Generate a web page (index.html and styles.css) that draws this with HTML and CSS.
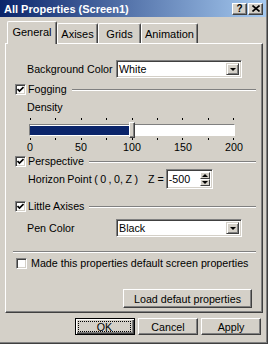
FILE: index.html
```html
<!DOCTYPE html>
<html>
<head>
<title>All Properties (Screen1)</title>
<link rel="stylesheet" href="styles.css">
</head>
<body>
<div class="dialog">
  <div class="titlebar">
    <span class="title">All Properties (Screen1)</span>
    <span class="capbtn">?</span>
    <span class="capbtn close"><svg width="8" height="7" viewBox="0 0 8 7"><path d="M0.5 0.5L7.5 6.5M7.5 0.5L0.5 6.5" stroke="#000" stroke-width="1.6"/></svg></span>
  </div>

  <div class="tabs">
    <div class="tab active w-general">General</div>
    <div class="tab w-axises">Axises</div>
    <div class="tab w-grids">Grids</div>
    <div class="tab w-anim">Animation</div>
  </div>

  <div class="panel">
    <div class="field first">
      <span class="label">Background Color</span>
      <div class="select"><span class="value">White</span><span class="dropbtn"><i class="down"></i></span></div>
    </div>

    <div class="group">
      <span class="check"><svg width="7" height="7" viewBox="0 0 7 7"><path d="M0.5 3L2.5 5L6.5 1" fill="none" stroke="#000" stroke-width="1.7"/></svg></span>
      <span>Fogging</span><span class="rule"></span>
    </div>
    <div class="sub">Density</div>
    <div class="slider">
      <div class="ticks"><i></i><i></i><i></i><i></i><i></i><i></i><i></i><i></i><i></i></div>
      <div class="track"><div class="fill" style="width:50%"></div><div class="thumb"></div></div>
      <div class="ticks low"><i></i><i></i><i></i><i></i><i></i><i></i><i></i><i></i><i></i></div>
      <div class="scale"><span>0</span><span>50</span><span>100</span><span>150</span><span>200</span></div>
    </div>

    <div class="group persp">
      <span class="check"><svg width="7" height="7" viewBox="0 0 7 7"><path d="M0.5 3L2.5 5L6.5 1" fill="none" stroke="#000" stroke-width="1.7"/></svg></span>
      <span>Perspective</span><span class="rule"></span>
    </div>
    <div class="horizon">
      <span class="hlabel">Horizon Point ( 0 , 0, Z )</span>
      <span class="zeq">Z =</span>
      <div class="spin"><span class="value">-500</span>
        <span class="spinbtns"><span class="sb"><i class="up"></i></span><span class="sb"><i class="down"></i></span></span>
      </div>
    </div>

    <div class="group axes">
      <span class="check"><svg width="7" height="7" viewBox="0 0 7 7"><path d="M0.5 3L2.5 5L6.5 1" fill="none" stroke="#000" stroke-width="1.7"/></svg></span>
      <span>Little Axises</span><span class="rule"></span>
    </div>
    <div class="field pen">
      <span class="label">Pen Color</span>
      <div class="select"><span class="value">Black</span><span class="dropbtn"><i class="down"></i></span></div>
    </div>

    <div class="separator"></div>

    <div class="group plain">
      <span class="check"></span>
      <span>Made this properties default screen properties</span>
    </div>

    <div class="btn load">Load defaut properties</div>
  </div>

  <div class="buttons">
    <div class="btn default"><span class="focus">OK</span></div>
    <div class="btn">Cancel</div>
    <div class="btn">Apply</div>
  </div>
</div>
</body>
</html>
```

FILE: styles.css
```css
body { margin: 0; background: #d4d0c8; font-family: "Liberation Sans", Arial, sans-serif; font-size: 10.7px; color: #000; }

.dialog { width: 268px; height: 344px; box-sizing: border-box;
  border-right: 1px solid #404040; border-bottom: 1px solid #404040;
  box-shadow: inset -1px -1px 0 #808080;
  display: flex; flex-direction: column; }

/* caption */
.titlebar { height: 17px; margin-right: 1px; padding: 0 3px 0 4px;
  background: linear-gradient(to right, #0a246a, #a6caf0);
  display: flex; align-items: center; }
.title { flex: 1; color: #fff; font-weight: bold; font-size: 11px; }
.capbtn { width: 13px; height: 10px; box-sizing: content-box; background: #d4d0c8;
  border: 1px solid; border-color: #fff #404040 #404040 #fff;
  box-shadow: inset -1px -1px 0 #808080;
  display: flex; align-items: center; justify-content: center;
  font-weight: bold; font-size: 10px; line-height: 10px; }
.capbtn.close { margin-left: 1px; }

/* tabs */
.tabs { height: 26px; padding-left: 7px; display: flex; align-items: flex-end; z-index: 1; }
.tab { height: 20px; box-sizing: border-box; border: 1px solid; border-color: #fff #404040 transparent #fff;
  border-bottom: none; border-radius: 2px 2px 0 0; box-shadow: inset -1px 0 0 #808080;
  display: flex; align-items: center; justify-content: center; font-size: 11px; padding-top: 1px; }
.tab.active { height: 23px; margin-bottom: -1px; background: #d4d0c8; padding-bottom: 3px; }
.w-general { width: 50px; }
.w-axises { width: 41px; }
.w-grids { width: 43px; }
.w-anim { width: 57px; }

/* page */
.panel { height: 270px; margin: 0 4px 0 5px; box-sizing: border-box;
  border: 1px solid; border-color: #fff #404040 #404040 #fff;
  box-shadow: inset -1px -1px 0 #808080;
  display: flex; flex-direction: column; }

.field { height: 18px; display: flex; align-items: center; padding-left: 21px; }
.field.first { margin-top: 16px; }
.field.pen { margin-top: 7px; }
.field .label { width: 89px; }

.select { width: 126px; height: 18px; box-sizing: border-box; background: #fff;
  border: 1px solid; border-color: #808080 #fff #fff #808080;
  box-shadow: inset 1px 1px 0 #404040, inset -1px -1px 0 #d4d0c8;
  display: flex; align-items: center; padding: 2px; }
.select .value { flex: 1; }
.dropbtn { width: 13px; height: 12px; box-sizing: border-box; background: #d4d0c8;
  border: 1px solid; border-color: #d4d0c8 #404040 #404040 #d4d0c8;
  box-shadow: inset 1px 1px 0 #fff, inset -1px -1px 0 #808080;
  display: flex; align-items: center; justify-content: center; }

i.down { display: block; width: 0; height: 0; border-left: 3px solid transparent; border-right: 3px solid transparent; border-top: 3px solid #000; }
i.up { display: block; width: 0; height: 0; border-left: 3px solid transparent; border-right: 3px solid transparent; border-bottom: 3px solid #000; }

.group { height: 12px; margin-top: 5px; display: flex; align-items: center; padding-left: 9px; }
.group.persp { margin-top: 2px; }
.group.axes { margin-top: 11px; }
.group.plain { margin-top: 4px; padding-left: 10px; }
.check { width: 11px; height: 11px; box-sizing: border-box; background: #fff; margin-right: 2px;
  border: 1px solid; border-color: #808080 #fff #fff #808080;
  box-shadow: inset 1px 1px 0 #404040, inset -1px -1px 0 #d4d0c8;
  display: flex; align-items: center; justify-content: center; }
.group.plain .check { margin-right: 4px; }
.rule { flex: 1; height: 0; border-top: 1px solid #808080; border-bottom: 1px solid #fff; margin: 1px 6px 0 5px; }

.sub { height: 12px; margin-top: 6px; padding-left: 21px; line-height: 12px; }

/* trackbar */
.slider { width: 206px; margin: 4px 0 0 23px; display: flex; flex-direction: column; }
.ticks { height: 4px; padding: 0 1px; display: flex; justify-content: space-between; align-items: flex-start; }
.ticks i { width: 1px; height: 2px; margin-top: 1px; background: #000; }
.ticks.low { margin-top: 1px; }
.track { height: 12px; margin-top: 3px; box-sizing: border-box; background: #fff;
  border: 1px solid; border-color: #808080 #fff #fff #808080;
  display: flex; }
.fill { background: #0a246a; margin-top: 1px; }
.thumb { width: 6px; box-sizing: border-box; margin: -3px 0 -3px -3px; background: #d4d0c8;
  border: 1px solid; border-color: #fff #404040 #404040 #fff;
  box-shadow: inset -1px -1px 0 #808080; }
.scale { height: 12px; margin: 0 -9px; display: flex; justify-content: space-between; line-height: 12px; }
.scale span { width: 20px; text-align: center; }

.horizon { height: 20px; margin-top: 2px; padding-left: 22px; display: flex; align-items: center; }
.hlabel { word-spacing: -0.5px; }
.zeq { margin-left: 10px; margin-right: 2px; }
.spin { width: 47px; height: 20px; box-sizing: border-box; background: #fff;
  border: 1px solid; border-color: #808080 #fff #fff #808080;
  box-shadow: inset 1px 1px 0 #404040, inset -1px -1px 0 #d4d0c8;
  display: flex; align-items: stretch; padding: 2px; }
.spin .value { flex: 1; display: flex; align-items: center; }
.spinbtns { width: 10px; display: flex; flex-direction: column; }
.sb { flex: 1; box-sizing: border-box; background: #d4d0c8;
  border: 1px solid; border-color: #fff #404040 #404040 #fff;
  display: flex; align-items: center; justify-content: center; }

.separator { height: 0; margin: 14px 6px 0 7px; border-top: 1px solid #808080; border-bottom: 1px solid #fff; }

/* buttons */
.btn { height: 19px; box-sizing: border-box; background: #d4d0c8;
  border: 1px solid; border-color: #fff #404040 #404040 #fff;
  box-shadow: inset -1px -1px 0 #808080;
  display: flex; align-items: center; justify-content: center; }
.btn.load { width: 129px; margin: 20px 10px 0 0; align-self: flex-end; }

.buttons { margin: 5px 6px 0 0; display: flex; justify-content: flex-end; gap: 3px; }
.buttons .btn { width: 60px; height: 17px; }
.buttons .btn.default { border: 1px solid #000; box-shadow: inset 1px 1px 0 #fff, inset -1px -1px 0 #404040, inset -2px -2px 0 #808080; }
.focus { flex: 1; align-self: stretch; margin: 2px 3px 2px 2px; border: 1px dotted #000;
  display: flex; align-items: center; justify-content: center; }
```
